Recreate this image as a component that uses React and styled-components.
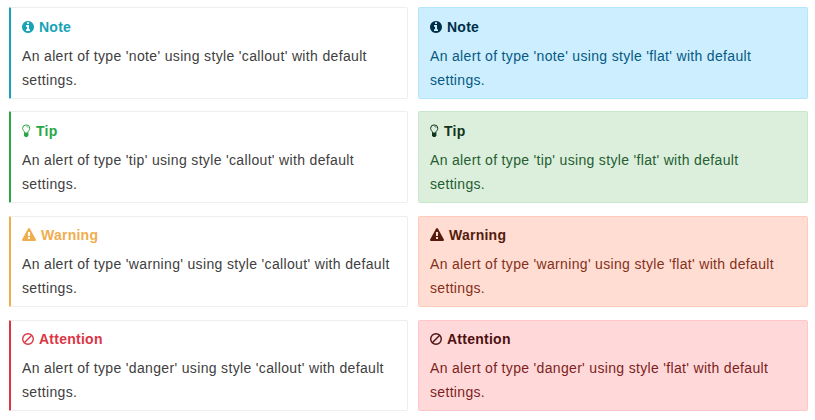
import React from "react";
import styled, { createGlobalStyle } from "styled-components";

const Global = createGlobalStyle`
  * { box-sizing: border-box; }
  body { margin: 0; background: #fff; font-family: "Liberation Sans", Arial, sans-serif; }
`;
const Page = styled.main`
  width: 815px;
  height: 420px;
  padding: 7px 7px 0 9px;
  display: grid;
  grid-template-columns: 399px 390px;
  grid-template-rows: 104px 105px 104px 91px;
  column-gap: 10px;
  align-content: start;
  align-items: start;
`;
const Alert = styled.section`
  height: ${(p) => (p.$compact ? 91 : 92)}px;
  background: ${(p) => p.$bg || "#fff"};
  color: ${(p) => p.$text || "#404040"};
  border: 1px solid ${(p) => p.$border || "#eee"};
  ${(p) => p.$accent && `border-left: 2px solid ${p.$accent};`}
  border-radius: ${(p) => (p.$accent ? "1px 2px 2px 1px" : "1.5px")};
  padding: ${(p) => (p.$compact ? 6 : 7)}px 11px 0;
  letter-spacing: ${(p) => (p.$accent ? 0.34 : 0.325)}px;
`;
const Title = styled.h4`
  margin: 0 0 5px;
  display: flex;
  align-items: center;
  gap: 5px;
  color: ${(p) => p.$color};
  font-size: 14px;
  line-height: 24px;
  letter-spacing: 0.25px;
`;
const Text = styled.p`
  margin: 0;
  font-size: 14px;
  line-height: 24px;
`;
const Glyph = styled.svg`
  display: block;
  height: 14px;
  width: ${(p) => p.$w}px;
  fill: currentColor;
`;

const icons = {
  note: {
    w: 12,
    box: "0 0 1536 1792",
    art: <path d="M1024 1376v-160q0-14-9-23t-23-9h-96v-512q0-14-9-23t-23-9h-320q-14 0-23 9t-9 23v160q0 14 9 23t23 9h96v320h-96q-14 0-23 9t-9 23v160q0 14 9 23t23 9h448q14 0 23-9t9-23zm-128-896v-160q0-14-9-23t-23-9h-192q-14 0-23 9t-9 23v160q0 14 9 23t23 9h192q14 0 23-9t9-23zm640 416q0 209-103 385.500t-279.500 279.500-385.500 103-385.500-103-279.500-279.500-103-385.500 103-385.500 279.500-279.500 385.500-103 385.500 103 279.500 279.500 103 385.500z" />,
  },
  tip: {
    w: 9,
    box: "0 0 9 14",
    art: (
      <>
        <path
          d="M2.7 8.8C2.6 7 .6 6.5.6 4.3a3.6 3.4 0 0 1 7.2 0c0 2.2-2 2.7-2.1 4.5"
          fill="none"
          stroke="currentColor"
          strokeWidth="1"
        />
        <path d="M4.2 2.3c1 0 1.8.6 1.8 1.6" fill="none" stroke="currentColor" strokeWidth=".6" />
        <path d="M2 8.6h4.4v3L5.3 13H3.1L2 11.6z" />
      </>
    ),
  },
  warning: {
    w: 14,
    box: "0 0 1792 1792",
    art: <path d="M1024 1375v-190q0-14-9.500-23.500t-22.500-9.500h-192q-13 0-22.500 9.500t-9.500 23.500v190q0 14 9.500 23.500t22.500 9.500h192q13 0 22.500-9.500t9.500-23.500zm-2-374l18-459q0-12-10-19-13-11-24-11h-220q-11 0-24 11-10 7-10 21l17 457q0 10 10 16.500t24 6.500h185q14 0 23.500-6.500t10.500-16.500zm-14-934l768 1408q35 63-2 126-17 29-46.500 46t-63.500 17h-1536q-34 0-63.500-17t-46.500-46q-37-63-2-126l768-1408q17-31 47-49t65-18 65 18 47 49z" />,
  },
  danger: {
    w: 12,
    box: "0 0 12 14",
    art: (
      <g fill="none" stroke="currentColor" strokeWidth="1.4">
        <circle cx="6" cy="7" r="5.3" />
        <path d="M2.3 10.7 9.7 3.3" />
      </g>
    ),
  },
};

const alerts = [
  { type: "note", title: "Note", accent: "#17a2b8", dark: "#002f48", text: "#075982", bg: "#cceeff", border: "#b3e5fc" },
  { type: "tip", title: "Tip", accent: "#28a745", dark: "#12351c", text: "#265d31", bg: "#dbefdc", border: "#c9e7ca" },
  { type: "warning", title: "Warning", accent: "#f0ad4e", dark: "#551b0b", text: "#84301a", bg: "#ffddd3", border: "#ffccbc", compact: true },
  { type: "danger", title: "Attention", accent: "#dc3545", dark: "#4d1010", text: "#7c1e1e", bg: "#ffd9d9", border: "#ffc7c7", compact: true },
];

function AlertBox({ a, flat }) {
  const icon = icons[a.type];
  return (
    <Alert
      $compact={a.compact}
      $bg={flat && a.bg}
      $border={flat && a.border}
      $text={flat && a.text}
      $accent={!flat && a.accent}
    >
      <Title $color={flat ? a.dark : a.accent}>
        <Glyph $w={icon.w} viewBox={icon.box} aria-hidden="true">{icon.art}</Glyph>
        {a.title}
      </Title>
      <Text>{`An alert of type '${a.type}' using style '${flat ? "flat" : "callout"}' with default settings.`}</Text>
    </Alert>
  );
}

export default function App() {
  return (
    <>
      <Global />
      <Page>
        {alerts.map((a) => (
          <React.Fragment key={a.type}>
            <AlertBox a={a} />
            <AlertBox a={a} flat />
          </React.Fragment>
        ))}
      </Page>
    </>
  );
}
